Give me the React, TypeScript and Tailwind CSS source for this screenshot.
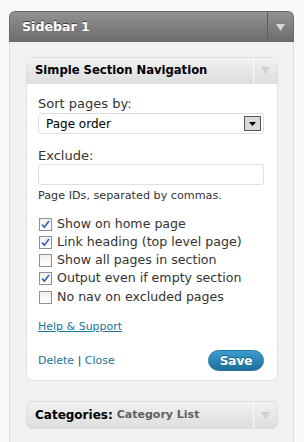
import { useState } from "react"

const font = { fontFamily: '"DejaVu Sans", Verdana, sans-serif' }

function Arrow({ light }: { light?: boolean }) {
  return (
    <svg width="9" height="7" viewBox="0 0 9 7">
      <path d="M0 0h9L4.5 7z" fill={light ? "#cfcfcf" : "#d6d6d6"} />
    </svg>
  )
}

function Check({ label, checked }: { label: string; checked: boolean }) {
  return (
    <label className="flex items-center gap-[5px] h-[18.25px]">
      <span className="w-[13px] h-[13px] border border-[#8f8f8f] bg-gradient-to-b from-[#f0f0f0] to-[#fefefe] flex items-center justify-center">
        {checked && (
          <svg width="9" height="9" viewBox="0 0 9 9">
            <path d="M1 4.5l2.3 2.7L8 1" stroke="#3a5cb4" strokeWidth="1.6" fill="none" />
          </svg>
        )}
      </span>
      <span className="text-[12.6px] text-[#333]">{label}</span>
    </label>
  )
}

export default function App() {
  const [items] = useState([
    { label: "Show on home page", checked: true },
    { label: "Link heading (top level page)", checked: true },
    { label: "Show all pages in section", checked: false },
    { label: "Output even if empty section", checked: true },
    { label: "No nav on excluded pages", checked: false },
  ])

  return (
    <div className="w-[304px] h-[442px] bg-[#f9f9f9] pt-[11px] pl-[9px] overflow-hidden" style={font}>
      <div className="w-[285px] h-[431px] flex flex-col">
        <div className="h-[31px] rounded-t-[6px] bg-gradient-to-b from-[#929292] to-[#6b6b6b] flex border border-b-0 border-[#6b6b6b]">
          <div className="flex-1 pl-[12px] flex items-center text-white font-bold text-[12.6px] [text-shadow:0_-1px_0_#3f3f3f]">
            Sidebar 1
          </div>
          <div className="w-[26px] border-l border-[#5d5d5d] flex items-center justify-center">
            <Arrow />
          </div>
        </div>
        <div className="flex-1 bg-[#f1f1f1] border-x border-[#dfdfdf] pl-[16px] pr-[15px] pt-[15px]">
          <div className="rounded-[6px] border border-[#dfdfdf] bg-white">
            <div className="h-[26px] flex rounded-t-[6px] bg-gradient-to-b from-[#f1f1f1] to-[#dedede] border-b border-[#dfdfdf]">
              <div className="flex-1 pl-[8px] flex items-center font-bold text-[11.6px] text-black">
                Simple Section Navigation
              </div>
              <div className="w-[24px] border-l border-[#fafafa] flex items-center justify-center">
                <Arrow light />
              </div>
            </div>
            <div className="pl-[11px] pr-[13px] pt-[12px] pb-[9px]">
              <div className="text-[13px] text-[#333] leading-[16px]">Sort pages by:</div>
              <div className="mt-[1px] h-[21px] border border-[#dfdfdf] rounded-[3px] flex items-center pl-[7px] pr-[2px]">
                <span className="flex-1 text-[12px] text-black">Page order</span>
                <span className="w-[17px] h-[15px] border border-[#555] bg-[#d9d9d9] flex items-center justify-center">
                  <svg width="7" height="4" viewBox="0 0 7 4">
                    <path d="M0 0h7L3.5 4z" fill="#000" />
                  </svg>
                </span>
              </div>
              <div className="mt-[14px] text-[13px] text-[#333] leading-[16px]">Exclude:</div>
              <div className="h-[21px] border border-[#dfdfdf] rounded-[3px]" />
              <div className="mt-[3px] text-[11.2px] text-[#333] leading-[15px]">Page IDs, separated by commas.</div>
              <div className="mt-[12px] flex flex-col pl-[1px]">
                {items.map((it) => (
                  <Check key={it.label} label={it.label} checked={it.checked} />
                ))}
              </div>
              <div className="mt-[14px] text-[11px] text-[#21759b] underline leading-[14px]">Help &amp; Support</div>
              <div className="mt-[16px] flex items-center justify-between">
                <div className="text-[11px] text-[#21759b]">
                  Delete <span className="text-[#333]">|</span> Close
                </div>
                <button className="h-[21px] w-[56px] rounded-full bg-gradient-to-b from-[#3a9cd0] to-[#1f6f9a] border border-[#21759b] text-white font-bold text-[12px] [text-shadow:0_-1px_0_#1a5a7c]">
                  Save
                </button>
              </div>
            </div>
          </div>
          <div className="mt-[20px] h-[28px] rounded-[6px] border border-[#dfdfdf] bg-gradient-to-b from-[#f1f1f1] to-[#dedede] flex">
            <div className="flex-1 pl-[8px] flex items-center text-[12px] font-bold">
              <span className="text-black">Categories:</span>
              <span className="ml-[4px] text-[#606060] text-[11px]">Category List</span>
            </div>
            <div className="w-[24px] border-l border-[#fafafa] flex items-center justify-center">
              <Arrow light />
            </div>
          </div>
        </div>
      </div>
    </div>
  )
}
